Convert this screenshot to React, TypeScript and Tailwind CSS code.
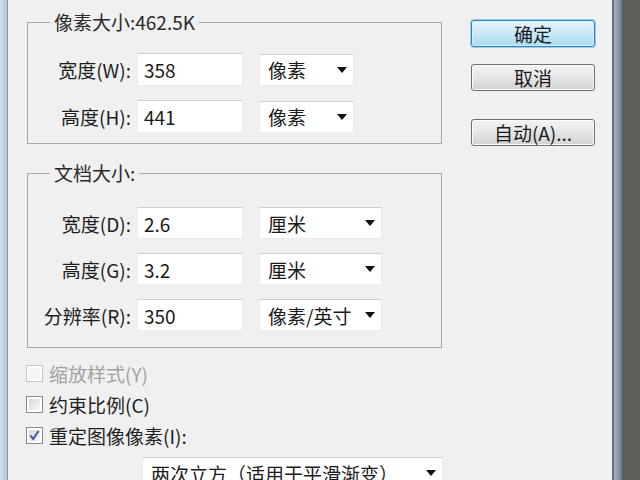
import React from "react";

const Arrow = () => (
  <svg width="10" height="6" viewBox="0 0 10 6" className="shrink-0">
    <path d="M0 0 H10 L5 6 Z" fill="#111" />
  </svg>
);

function Select({ w, text }: { w: string; text: string }) {
  return (
    <div
      className={`${w} h-[32px] ml-[16px] bg-white border border-[#ececec] border-t-[#cfcfcf] flex items-center justify-between pl-[8px] pr-[6px] text-[#1a1a1a]`}
    >
      <span>{text}</span>
      <Arrow />
    </div>
  );
}

function Row({ label, value, selW, unit, h }: { label: string; value: string; selW: string; unit: string; h: string }) {
  return (
    <div className={`flex items-center ${h}`}>
      <div className="w-[103px] text-right text-[#1e1e1e] whitespace-nowrap">{label}</div>
      <div className={`ml-[6px] w-[106px] ${h} bg-white border border-[#ececec] border-t-[#d0d0d0] flex items-center pl-[6px] text-[#1a1a1a]`}>
        {value}
      </div>
      <Select w={selW} text={unit} />
    </div>
  );
}

function Check({ label, state }: { label: string; state: "disabled" | "off" | "on" }) {
  const dis = state === "disabled";
  return (
    <div className="h-[31px] flex items-center ml-[-1px]">
      <div
        className={`w-[17px] h-[17px] border ${dis ? "border-[#c8c8c8]" : "border-[#8a8a8a]"} bg-white p-[2px] flex items-center justify-center`}
      >
        <div
          className={`w-full h-full ${dis ? "bg-[#f4f4f4]" : "bg-gradient-to-br from-[#d6d6d6] to-[#fbfbfb]"} flex items-center justify-center`}
        >
          {state === "on" && (
            <svg width="11" height="11" viewBox="0 0 11 11">
              <path d="M1.5 5.5 L4.2 9 L9.5 1" stroke="#3d56a0" strokeWidth="2" fill="none" />
            </svg>
          )}
        </div>
      </div>
      <span className={`ml-[6px] ${dis ? "text-[#a3a3a3]" : "text-[#1e1e1e]"}`}>{label}</span>
    </div>
  );
}

function Btn({ label, primary }: { label: string; primary?: boolean }) {
  return (
    <div
      className={
        primary
          ? "w-[124px] h-[27px] rounded-[3px] border border-[#3c7fb1] bg-gradient-to-b from-[#eaf6fd] via-[#c8e7f7] to-[#a9daf3] shadow-[0_0_0_1px_#8ed0f0,inset_0_0_0_1px_#d7f0fc] flex items-center justify-center text-[#1a1a1a]"
          : "w-[124px] h-[27px] rounded-[3px] border border-[#707070] bg-gradient-to-b from-[#f4f4f4] via-[#e6e6e6] to-[#d2d2d2] shadow-[inset_0_0_0_1px_#fbfbfb] flex items-center justify-center text-[#1a1a1a]"
      }
    >
      {label}
    </div>
  );
}

export default function App() {
  return (
    <div className="w-[640px] h-[480px] flex overflow-hidden text-[19px] leading-none font-['Noto_Sans_CJK_SC','Noto_Sans',sans-serif]">
      <div className="w-[8px] h-full bg-gradient-to-r from-[#cfe0ef] to-[#b3c8dd] border-r border-[#8c98a6]" />
      <div className="flex-1 h-full bg-[#f0f0f0] flex">
        <div className="pl-[19px] pt-[12px] w-[434px] shrink-0">
          <fieldset className="w-[415px] border border-[#a9a9a9] m-0 pt-[21px] pb-[10px] px-0">
            <legend className="ml-[22px] px-[4px] leading-[20px] text-[#2a2a2a]">像素大小:462.5K</legend>
            <div className="flex flex-col gap-[14px]">
              <Row label="宽度(W):" value="358" selW="w-[95px]" unit="像素" h="h-[33px]" />
              <Row label="高度(H):" value="441" selW="w-[95px]" unit="像素" h="h-[33px]" />
            </div>
          </fieldset>
          <fieldset className="w-[415px] mt-[19px] border border-[#a9a9a9] m-0 pt-[24px] pb-[16px] px-0">
            <legend className="ml-[22px] px-[4px] leading-[20px] text-[#2a2a2a]">文档大小:</legend>
            <div className="flex flex-col gap-[14px]">
              <Row label="宽度(D):" value="2.6" selW="w-[123px]" unit="厘米" h="h-[32px]" />
              <Row label="高度(G):" value="3.2" selW="w-[123px]" unit="厘米" h="h-[32px]" />
              <Row label="分辨率(R):" value="350" selW="w-[123px]" unit="像素/英寸" h="h-[32px]" />
            </div>
          </fieldset>
          <div className="mt-[10px] flex flex-col">
            <Check label="缩放样式(Y)" state="disabled" />
            <Check label="约束比例(C)" state="off" />
            <Check label="重定图像像素(I):" state="on" />
          </div>
          <div className="mt-[6px] ml-[115px] w-[301px] h-[32px] bg-white border border-[#ececec] border-t-[#cfcfcf] flex items-center justify-between pl-[8px] pr-[6px] text-[#1a1a1a]">
            <span>两次立方（适用于平滑渐变）</span>
            <Arrow />
          </div>
        </div>
        <div className="ml-[29px] pt-[20px] flex flex-col">
          <Btn label="确定" primary />
          <div className="mt-[17px]">
            <Btn label="取消" />
          </div>
          <div className="mt-[28px]">
            <Btn label="自动(A)..." />
          </div>
        </div>
      </div>
      <div className="w-[12px] h-full border-l-2 border-[#66717e] bg-gradient-to-r from-[#a3afbd] via-[#8e9aa9] to-[#6f7a87] border-r-2 border-r-[#56606b]" />
      <div className="w-[16px] h-full bg-[#615f5c]" />
    </div>
  );
}
